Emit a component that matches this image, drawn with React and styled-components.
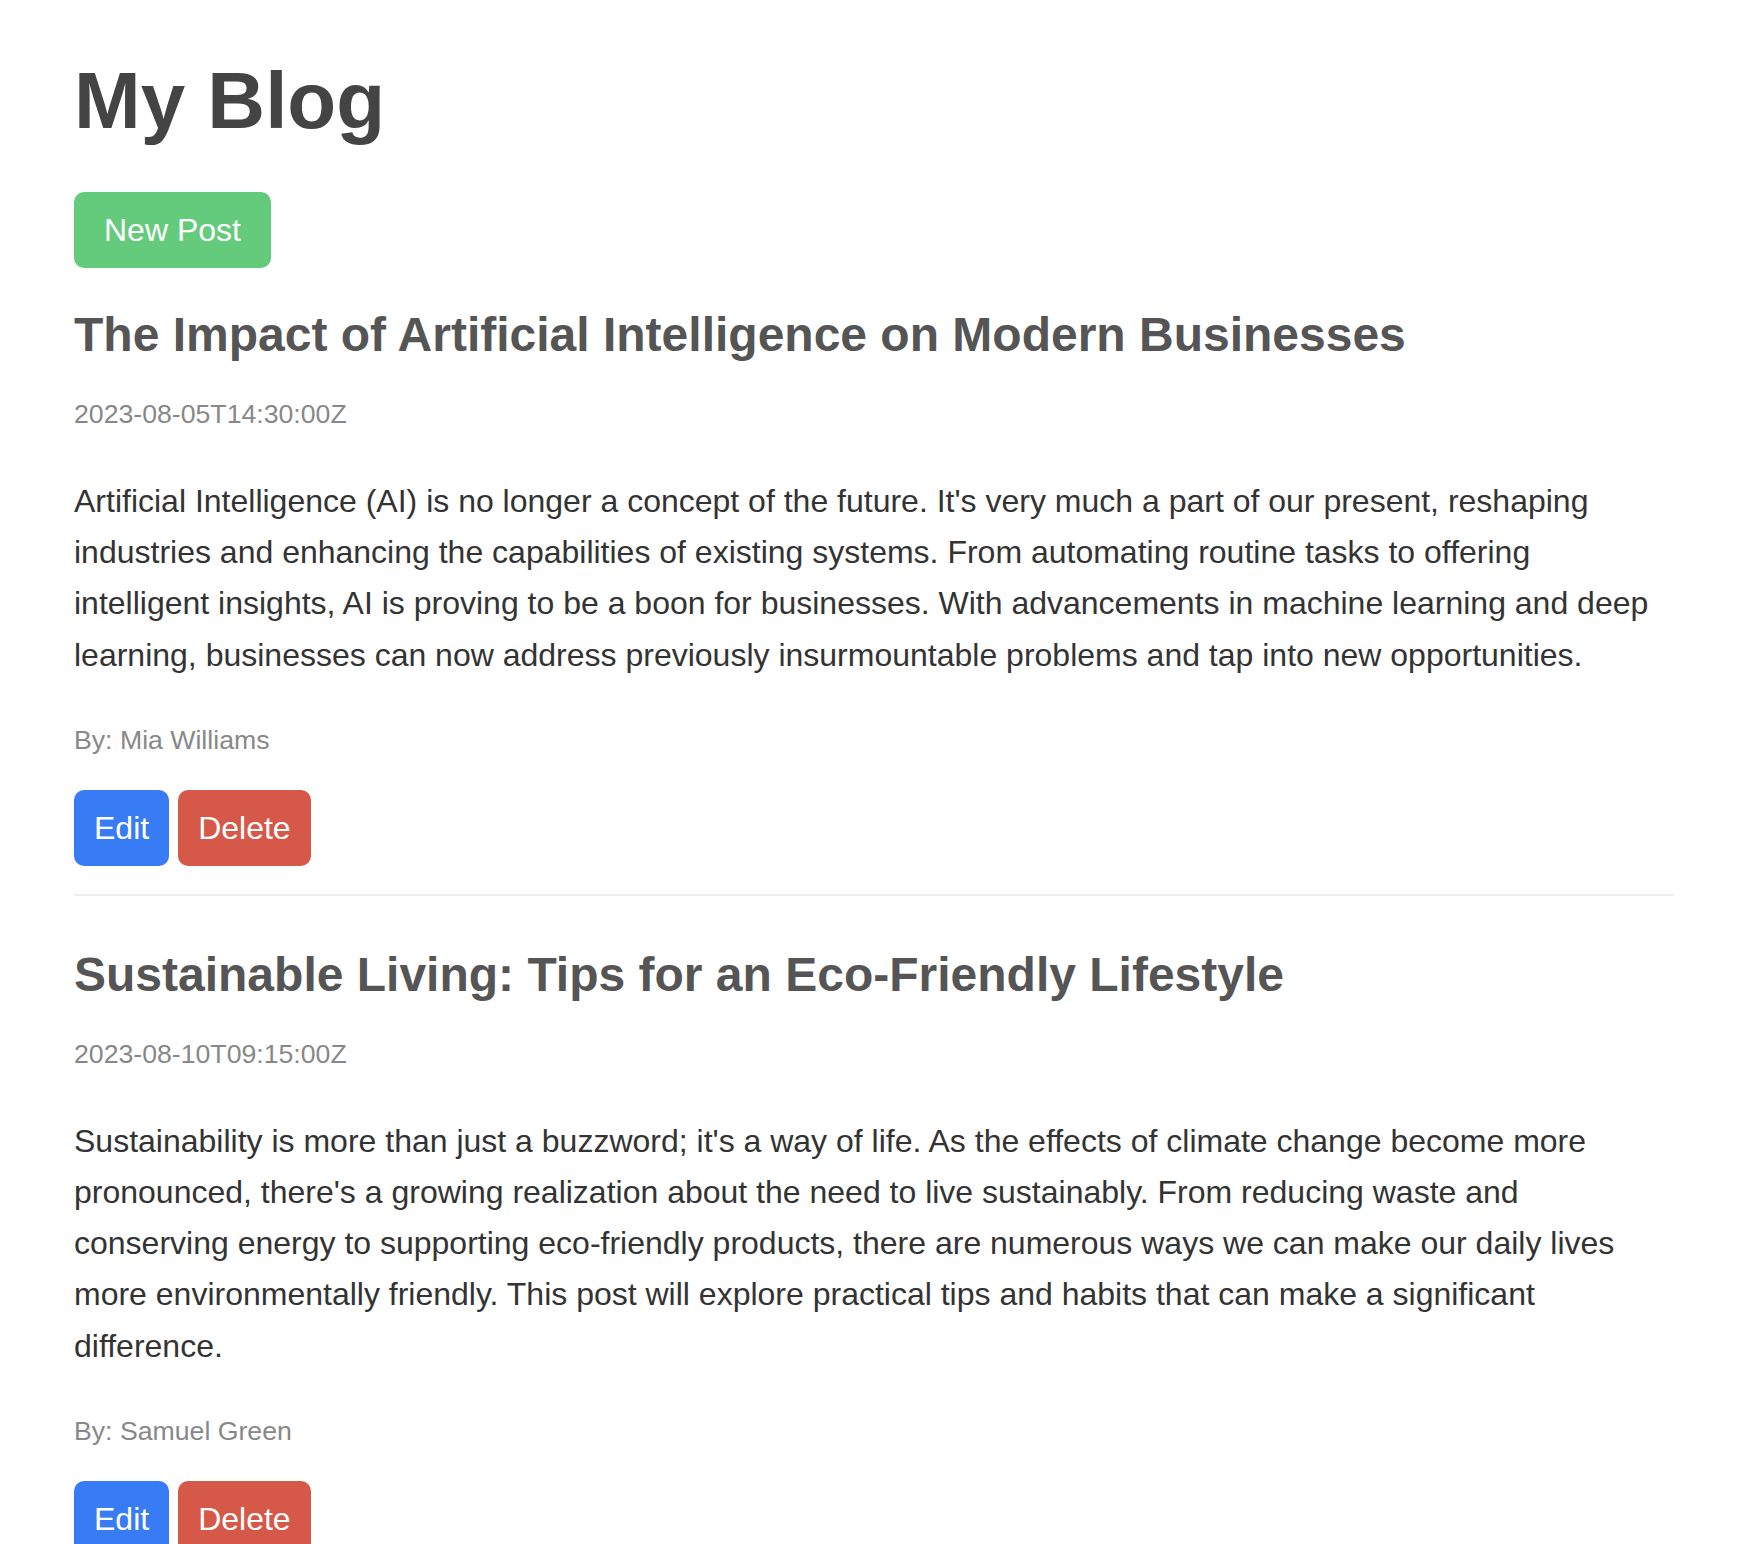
import React from 'react';
import styled, { createGlobalStyle, css } from 'styled-components';

const GlobalStyle = createGlobalStyle`
  body {
    margin: 0;
    background: #fff;
    font-family: 'Liberation Sans', Arial, Helvetica, sans-serif;
  }
`;

const Page = styled.div`
  max-width: 1600px;
  margin: 0 auto;
  padding-top: 55px;
`;

const Heading = styled.h1`
  margin: 0 0 45px;
  font-size: 80px;
  line-height: 92px;
  font-weight: 700;
  color: #444;
`;

const Button = styled.button`
  display: inline-block;
  border: none;
  border-radius: 10px;
  padding: 20px 20px;
  font-family: inherit;
  font-size: 32px;
  line-height: 36px;
  color: #fff;
  cursor: pointer;

  ${({ variant }) =>
    variant === 'new' &&
    css`
      padding: 20px 30px;
      background-color: #64cb7c;
    `}
  ${({ variant }) =>
    variant === 'edit' &&
    css`
      background-color: #377bf5;
    `}
  ${({ variant }) =>
    variant === 'delete' &&
    css`
      background-color: #d65848;
    `}
`;

const Toolbar = styled.div`
  margin-bottom: 39px;
`;

const PostList = styled.div`
  display: flex;
  flex-direction: column;
  gap: 51px;
`;

const Post = styled.article`
  padding-bottom: 28px;
  border-bottom: 2px solid #eee;
`;

const PostTitle = styled.h2`
  margin: 0 0 37px;
  font-size: 48px;
  line-height: 55px;
  font-weight: 700;
  color: #555;
`;

const Meta = styled.p`
  margin: 0 0 ${({ gap }) => gap}px;
  font-size: 26.67px;
  line-height: 31px;
  color: #888;
`;

const Body = styled.p`
  margin: 0 0 44px;
  font-size: 32px;
  line-height: 51.2px;
  color: #333;
`;

const Actions = styled.div`
  display: flex;
  gap: 9px;
`;

const posts = [
  {
    id: 1,
    title: 'The Impact of Artificial Intelligence on Modern Businesses',
    date: '2023-08-05T14:30:00Z',
    body:
      "Artificial Intelligence (AI) is no longer a concept of the future. It's very much a part of our present, reshaping industries and enhancing the capabilities of existing systems. From automating routine tasks to offering intelligent insights, AI is proving to be a boon for businesses. With advancements in machine learning and deep learning, businesses can now address previously insurmountable problems and tap into new opportunities.",
    author: 'Mia Williams',
  },
  {
    id: 2,
    title: 'Sustainable Living: Tips for an Eco-Friendly Lifestyle',
    date: '2023-08-10T09:15:00Z',
    body:
      "Sustainability is more than just a buzzword; it's a way of life. As the effects of climate change become more pronounced, there's a growing realization about the need to live sustainably. From reducing waste and conserving energy to supporting eco-friendly products, there are numerous ways we can make our daily lives more environmentally friendly. This post will explore practical tips and habits that can make a significant difference.",
    author: 'Samuel Green',
  },
];

const App = () => (
  <>
    <GlobalStyle />
    <Page>
      <Heading>My Blog</Heading>
      <Toolbar>
        <Button variant="new">New Post</Button>
      </Toolbar>
      <PostList>
        {posts.map((post) => (
          <Post key={post.id}>
            <PostTitle>{post.title}</PostTitle>
            <Meta gap={46}>{post.date}</Meta>
            <Body>{post.body}</Body>
            <Meta gap={34}>By: {post.author}</Meta>
            <Actions>
              <Button variant="edit">Edit</Button>
              <Button variant="delete">Delete</Button>
            </Actions>
          </Post>
        ))}
      </PostList>
    </Page>
  </>
);

export default App;
